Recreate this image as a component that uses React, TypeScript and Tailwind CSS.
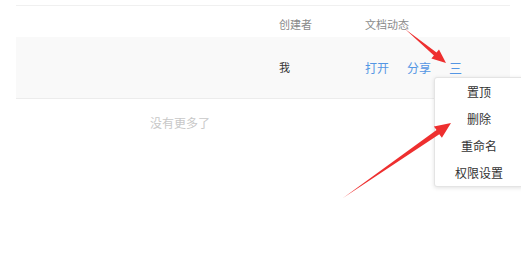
import React from "react";

const font = { fontFamily: '"Noto Sans CJK SC", "Noto Sans", sans-serif' };

export default function App() {
  return (
    <div className="relative w-[521px] h-[269px] bg-white overflow-hidden" style={font}>
      <div className="pt-[5px] pl-[16px] pr-[11px]">
        <div className="border-t border-[#f0f0f0]">
          <div className="flex h-[31px] items-center pt-[6px] text-[11px] text-[#8a8a8a]">
            <div className="w-[263px]" />
            <div className="w-[86px]">创建者</div>
            <div>文档动态</div>
          </div>
          <div className="flex h-[62px] items-center bg-[#f9f9f9] border-b border-[#ececec] text-[12px]">
            <div className="w-[263px]" />
            <div className="w-[86px] text-[#333] text-[11px]">我</div>
            <div className="flex items-center gap-[18px] text-[#5496e4]">
              <span>打开</span>
              <span>分享</span>
              <span className="text-[13px]">三</span>
            </div>
          </div>
        </div>
        <div className="pl-[134px] pt-[15px] text-[12px] text-[#c8c8c8]">没有更多了</div>
      </div>

      <div className="absolute left-[434px] top-[77px] w-[90px] h-[110px] bg-white border border-[#e4e4e4] rounded-[3px] shadow-[0_1px_4px_rgba(0,0,0,0.12)] flex flex-col items-center pt-[1px] text-[12px] text-[#333]">
        <div className="h-[27px] flex items-center">置顶</div>
        <div className="h-[27px] flex items-center">删除</div>
        <div className="h-[27px] flex items-center">重命名</div>
        <div className="h-[27px] flex items-center">权限设置</div>
      </div>

      <svg className="absolute left-0 top-0" width="521" height="269" viewBox="0 0 521 269">
        <polygon points="405,29 436.5,52.5 439,49.4 446,63 431.4,58.6 433.9,55.5" fill="#ee2f2f" />
        <polygon points="343,198 436.5,130 433.9,126.4 451,123 441.9,137.8 439.3,134.2" fill="#ee2f2f" />
      </svg>
    </div>
  );
}
